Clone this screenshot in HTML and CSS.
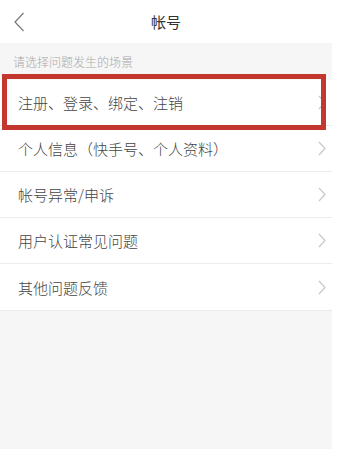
FILE: index.html
```html
<!DOCTYPE html>
<html lang="zh-CN">
<head>
<meta charset="utf-8">
<title>帐号</title>
<link rel="stylesheet" href="styles.css">
</head>
<body>
<div class="page">
  <header class="topbar">
    <svg class="back" width="12" height="20" viewBox="0 0 12 20"><polyline points="10.5,1 2,10 10.5,19" fill="none" stroke="#777" stroke-width="1.2"/></svg>
    <h1 class="title">帐号</h1>
  </header>
  <div class="section-label">请选择问题发生的场景</div>
  <ul class="list">
    <li class="row"><span>注册、登录、绑定、注销</span><svg class="chev" width="8" height="15" viewBox="0 0 8 15"><polyline points="1,1 7,7.5 1,14" fill="none" stroke="#c8c8c8" stroke-width="1.2"/></svg></li>
    <li class="row"><span>个人信息（快手号、个人资料）</span><svg class="chev" width="8" height="15" viewBox="0 0 8 15"><polyline points="1,1 7,7.5 1,14" fill="none" stroke="#c8c8c8" stroke-width="1.2"/></svg></li>
    <li class="row"><span>帐号异常/申诉</span><svg class="chev" width="8" height="15" viewBox="0 0 8 15"><polyline points="1,1 7,7.5 1,14" fill="none" stroke="#c8c8c8" stroke-width="1.2"/></svg></li>
    <li class="row"><span>用户认证常见问题</span><svg class="chev" width="8" height="15" viewBox="0 0 8 15"><polyline points="1,1 7,7.5 1,14" fill="none" stroke="#c8c8c8" stroke-width="1.2"/></svg></li>
    <li class="row last"><span>其他问题反馈</span><svg class="chev" width="8" height="15" viewBox="0 0 8 15"><polyline points="1,1 7,7.5 1,14" fill="none" stroke="#c8c8c8" stroke-width="1.2"/></svg></li>
  </ul>
  <div class="highlight"></div>
</div>
</body>
</html>
```
FILE: styles.css
```css
html, body {
  margin: 0;
  padding: 0;
  background: #ffffff;
  font-family: "Noto Sans CJK SC", "Noto Sans", sans-serif;
}
.page {
  position: relative;
  width: 332px;
  height: 449px;
  background: #f6f6f6;
  overflow: hidden;
}
.topbar {
  position: relative;
  height: 43px;
  background: #ffffff;
  display: flex;
  align-items: center;
  justify-content: center;
}
.back {
  position: absolute;
  left: 13px;
  top: 12px;
}
.title {
  margin: 0;
  font-size: 15px;
  font-weight: normal;
  color: #333333;
  line-height: 1;
}
.section-label {
  height: 37px;
  padding-left: 13px;
  display: flex;
  align-items: center;
  font-size: 12px;
  font-weight: 300;
  color: #a9a9a9;
}
.list {
  list-style: none;
  margin: 0;
  padding: 0;
  background: #ffffff;
}
.row {
  height: 45px;
  border-bottom: 1px solid #ececec;
  display: flex;
  align-items: center;
  justify-content: space-between;
  padding: 0 6px 0 18px;
  font-size: 15px;
  font-weight: 300;
  color: #444444;
}
.row.last {
  height: 46px;
}
.chev {
  display: block;
}
.highlight {
  position: absolute;
  left: 2px;
  top: 74px;
  width: 324px;
  height: 56px;
  box-sizing: border-box;
  border: 5px solid #c4372f;
}
```
